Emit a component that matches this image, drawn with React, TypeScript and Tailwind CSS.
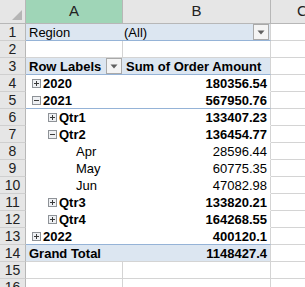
import React from "react";

type Row = {
  n: number;
  a?: string;
  b?: string;
  bold?: boolean;
  level?: number;
  box?: "plus" | "minus";
  kind?: "filter" | "header" | "pivot" | "total" | "empty";
  blueBottom?: boolean;
};

const rows: Row[] = [
  { n: 1, a: "Region", b: "(All)", kind: "filter", blueBottom: true },
  { n: 2, kind: "empty" },
  { n: 3, a: "Row Labels", b: "Sum of Order Amount", bold: true, kind: "header", blueBottom: true },
  { n: 4, a: "2020", b: "180356.54", bold: true, level: 0, box: "plus", kind: "pivot" },
  { n: 5, a: "2021", b: "567950.76", bold: true, level: 0, box: "minus", kind: "pivot", blueBottom: true },
  { n: 6, a: "Qtr1", b: "133407.23", bold: true, level: 1, box: "plus", kind: "pivot" },
  { n: 7, a: "Qtr2", b: "136454.77", bold: true, level: 1, box: "minus", kind: "pivot" },
  { n: 8, a: "Apr", b: "28596.44", level: 2, kind: "pivot" },
  { n: 9, a: "May", b: "60775.35", level: 2, kind: "pivot" },
  { n: 10, a: "Jun", b: "47082.98", level: 2, kind: "pivot" },
  { n: 11, a: "Qtr3", b: "133820.21", bold: true, level: 1, box: "plus", kind: "pivot" },
  { n: 12, a: "Qtr4", b: "164268.55", bold: true, level: 1, box: "plus", kind: "pivot" },
  { n: 13, a: "2022", b: "400120.1", bold: true, level: 0, box: "plus", kind: "pivot", blueBottom: true },
  { n: 14, a: "Grand Total", b: "1148427.4", bold: true, kind: "total" },
  { n: 15, kind: "empty" },
  { n: 16, kind: "empty" },
];

function Expander({ type }: { type: "plus" | "minus" }) {
  return (
    <svg width="9" height="9" viewBox="0 0 9 9" className="shrink-0">
      <rect x="0.5" y="0.5" width="8" height="8" fill="#eef0f3" stroke="#8e9297" />
      <line x1="2" y1="4.5" x2="7" y2="4.5" stroke="#3a3a3a" />
      {type === "plus" && <line x1="4.5" y1="2" x2="4.5" y2="7" stroke="#3a3a3a" />}
    </svg>
  );
}

function DropBtn() {
  return (
    <div className="w-[16px] h-[16px] border border-[#a9a9a9] bg-[#f4f4f4] flex items-center justify-center shrink-0">
      <svg width="8" height="5" viewBox="0 0 8 5">
        <polygon points="0.5,0.5 7.5,0.5 4,4.5" fill="#606060" />
      </svg>
    </div>
  );
}

export default function App() {
  const font = { fontFamily: '"Liberation Sans", Arial, sans-serif' };
  return (
    <div className="w-[305px] h-[287px] overflow-hidden bg-white text-black" style={font}>
      {/* column header row */}
      <div className="flex h-[24px]">
        <div className="w-[26px] h-full bg-[#e6e6e6] border-r border-b border-[#b7b7b7] relative shrink-0">
          <svg width="10" height="10" viewBox="0 0 10 10" className="absolute right-[3px] bottom-[3px]">
            <polygon points="10,0 10,10 0,10" fill="#b5b5b5" />
          </svg>
        </div>
        <div className="w-[97px] h-full bg-[#9fd5b7] border-r border-b border-[#b7b7b7] flex items-center justify-center text-[15px] text-[#222] shrink-0">
          A
        </div>
        <div className="w-[148px] h-full bg-[#e6e6e6] border-r border-b border-[#b7b7b7] flex items-center justify-center text-[15px] text-[#222] shrink-0">
          B
        </div>
        <div className="w-[64px] h-full bg-[#e6e6e6] border-r border-b border-[#b7b7b7] flex items-center justify-center text-[15px] text-[#222] shrink-0">
          C
        </div>
      </div>
      {rows.map((r) => {
        const blueBg = r.kind === "filter" || r.kind === "header" || r.kind === "total";
        const pivot = r.kind === "pivot";
        const bottom = r.blueBottom
          ? "border-b border-[#95b3d7]"
          : r.kind === "empty" || r.kind === "total"
          ? "border-b border-[#d4d4d4]"
          : "border-b border-transparent";
        const bg = blueBg ? "bg-[#dce6f1]" : "bg-white";
        const weight = r.bold ? "font-bold" : "font-normal";
        const lvl = r.level ?? 0;
        return (
          <div key={r.n} className="flex h-[17px]">
            <div className="w-[26px] h-full bg-[#e6e6e6] border-r border-b border-r-[#b7b7b7] border-b-[#cfcfcf] flex items-center justify-center text-[14px] leading-[16px] text-[#222] shrink-0">
              {r.n}
            </div>
            <div
              className={`w-[97px] h-full shrink-0 flex items-center text-[13px] leading-[15px] ${bg} ${bottom} ${weight} ${
                r.kind === "empty" ? "border-r border-r-[#d4d4d4]" : ""
              }`}
            >
              {pivot ? (
                <div
                  className={`flex items-center gap-[2px] pt-[1px] ${
                    lvl === 0 ? "pl-[6px]" : lvl === 1 ? "pl-[22px]" : "pl-[50px]"
                  }`}
                >
                  {r.box && <Expander type={r.box} />}
                  <span>{r.a}</span>
                </div>
              ) : r.kind === "header" ? (
                <div className="flex items-center justify-between w-full pl-[3px] pr-[1px]">
                  <span className="pt-[1px]">{r.a}</span>
                  <DropBtn />
                </div>
              ) : (
                <span className="pl-[3px] pt-[1px]">{r.a}</span>
              )}
            </div>
            <div
              className={`w-[148px] h-full shrink-0 flex items-center text-[13px] leading-[15px] ${bg} ${bottom} ${weight} border-r border-r-[#d4d4d4]`}
            >
              {r.kind === "filter" ? (
                <div className="flex items-center justify-between w-full pr-[1px]">
                  <span className="pt-[1px] pl-[1px]">{r.b}</span>
                  <DropBtn />
                </div>
              ) : r.kind === "header" ? (
                <span className="pl-[3px] pt-[1px] whitespace-nowrap">{r.b}</span>
              ) : (
                <span className="ml-auto pr-[3px] pt-[1px]">{r.b}</span>
              )}
            </div>
            <div className="w-[64px] h-full shrink-0 bg-white border-r border-b border-[#d4d4d4]"></div>
          </div>
        );
      })}
    </div>
  );
}
